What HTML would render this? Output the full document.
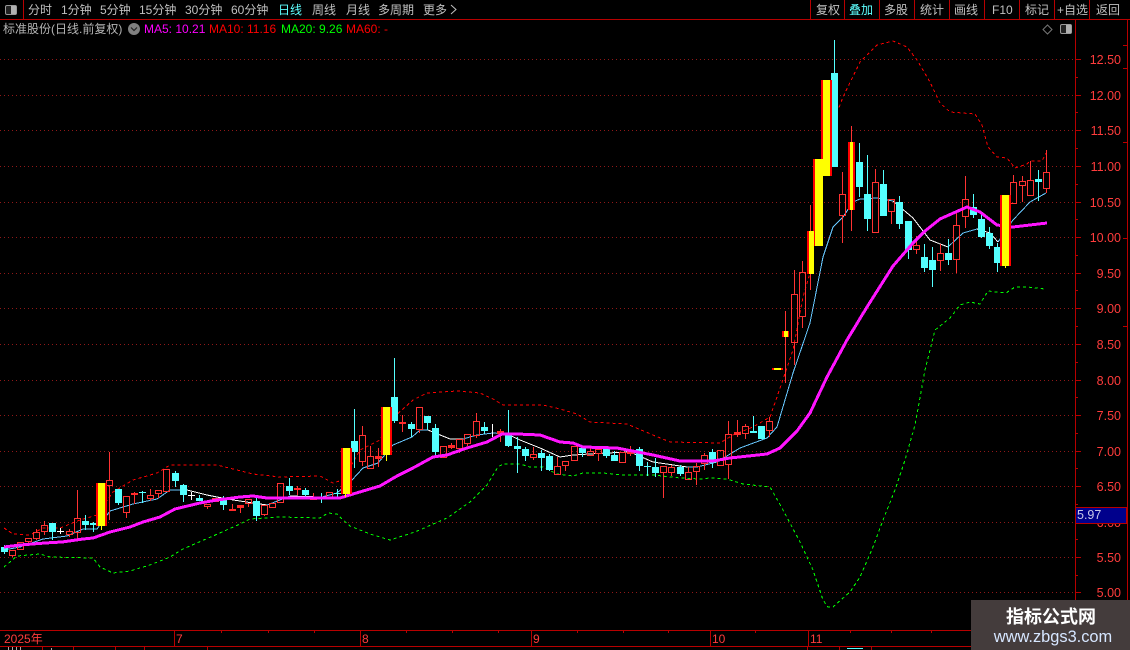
<!DOCTYPE html>
<html><head><meta charset="utf-8"><title>K</title>
<style>
html,body{margin:0;padding:0;background:#000;width:1130px;height:650px;overflow:hidden}
svg{display:block;position:absolute;left:0;top:0}
text{font-family:"Liberation Sans","WenQuanYi Zen Hei","Noto Sans CJK SC",sans-serif;font-size:12px}
.t{fill:#c0c0c0}
.c{fill:#5effff}
.p{fill:#ff3c3c;font-size:12.5px;text-anchor:end}
.d{fill:#ff3c3c;font-size:12px}
</style></head><body>
<svg width="1130" height="650" viewBox="0 0 1130 650" xmlns="http://www.w3.org/2000/svg">
<defs><pattern id="g" width="4" height="1" patternUnits="userSpaceOnUse"><rect width="1" height="1" fill="#901818"/></pattern></defs>
<rect width="1130" height="650" fill="#000"/>
<!-- grid -->
<g fill="url(#g)" shape-rendering="crispEdges">
<rect x="0" y="59" width="1075" height="1"/><rect x="0" y="95" width="1075" height="1"/><rect x="0" y="130" width="1075" height="1"/><rect x="0" y="166" width="1075" height="1"/><rect x="0" y="202" width="1075" height="1"/><rect x="0" y="237" width="1075" height="1"/><rect x="0" y="273" width="1075" height="1"/><rect x="0" y="308" width="1075" height="1"/><rect x="0" y="344" width="1075" height="1"/><rect x="0" y="380" width="1075" height="1"/><rect x="0" y="415" width="1075" height="1"/><rect x="0" y="451" width="1075" height="1"/><rect x="0" y="486" width="1075" height="1"/><rect x="0" y="522" width="1075" height="1"/><rect x="0" y="557" width="1075" height="1"/><rect x="0" y="592" width="1075" height="1"/>
</g>
<!-- thin MA -->
<g fill="none" stroke-width="1" shape-rendering="crispEdges">
<path stroke="#68c8ff" d="M4 550L20 547L43 539L67 536L83 529L97 529L110 511L133 504L157 499L170 490L187 490M267 505L280 500L290 496M322 497L337 493L352 480L363 468L378 463L393 445L412 437L420 430L428 430M463 439L477 435L493 433L507 434M687 467L697 467L717 462L740 448L767 438L777 427L793 373L810 323L823 257L833 227L843 217L853 202L860 199L877 198L893 201M948 247L963 233L977 229M998 242L1013 220L1030 202L1046 193"/>
<path stroke="#fff" d="M187 490L207 495L227 499L253 503L267 505M290 496L322 497M428 430L450 439L463 439M507 434L520 440L540 448L560 457L573 455L607 453L630 452L653 462L687 467M893 201L913 218L930 240L948 247M977 229L990 233L998 242"/>
<!-- upper band -->
<path stroke="#f00" stroke-dasharray="3 3" d="M4 528L13 534L30 535L43 528L60 528L80 520L97 515L113 492L133 480L157 473L170 465L217 465L233 469L253 474L280 477L320 476L333 483L343 480L360 450L380 440L393 418L413 400L427 393L457 391L480 393L493 399L503 405L543 405L560 409L577 414L590 422L627 424L653 435L670 442L720 443L733 435L753 427L770 417L777 397L793 350L803 297L810 273L823 173L833 123L843 97L860 62L877 45L893 41L907 47L917 60L930 82L940 103L950 112L975 114L982 125L988 147L997 157L1007 158L1015 168L1027 164L1030 161L1042 161L1046 153"/>
<!-- lower band -->
<path stroke="#0f0" stroke-dasharray="3 3" d="M4 567L17 556L40 554L50 557L93 558L100 567L113 573L130 571L150 565L170 557L183 549L213 536L240 524L250 519L280 517L320 518L328 513L337 514L343 520L350 526L370 534L390 540L415 532L447 518L470 502L487 485L498 467L503 464L520 464L530 467L543 467L557 474L573 476L583 473L603 473L623 475L653 475L680 478L700 479L710 478L727 479L743 484L770 487L782 508L800 542L813 570L823 600L828 607L833 607L850 592L860 577L873 547L883 520L895 490L905 460L915 425L925 370L935 330L950 318L960 305L970 302L980 304L988 291L1006 293L1015 287L1027 287L1045 289"/>
</g>
<g shape-rendering="crispEdges" fill="none">
<!-- red hollow -->
<path stroke="#ff3232" d="M12.5 555V557M9.5 550.5h6v5h-6zM17.5 542.5h6v7h-6zM28.5 541V544M25.5 538.5h6v3h-6zM36.5 529V532M36.5 538V540M33.5 532.5h6v6h-6zM44.5 521V525M44.5 531V535M41.5 525.5h6v6h-6zM69.5 529V531M69.5 534V537M66.5 531.5h6v3h-6zM77.5 490V518M77.5 532V540M74.5 518.5h6v14h-6zM109.5 452V480M109.5 485V520M106.5 480.5h6v5h-6zM126.5 512V518M123.5 496.5h6v16h-6zM150.5 489V495M150.5 498V501M147.5 495.5h6v3h-6zM158.5 493V498M155.5 490.5h6v3h-6zM163.5 469.5h6v22h-6zM207.5 506V509M204.5 504.5h6v2h-6zM212.5 498.5h6v3h-6zM248.5 503V507M245.5 499.5h6v4h-6zM264.5 514V516M261.5 505.5h6v9h-6zM269.5 503.5h6v4h-6zM277.5 483.5h6v19h-6zM329.5 497V499M326.5 492.5h6v5h-6zM362.5 426V435M362.5 461V466M359.5 435.5h6v26h-6zM370.5 446V456M367.5 456.5h6v12h-6zM419.5 429V433M416.5 407.5h6v22h-6zM440.5 446.5h6v11h-6zM459.5 448V453M456.5 439.5h6v9h-6zM467.5 443V446M464.5 434.5h6v9h-6zM476.5 413V421M476.5 435V438M473.5 421.5h6v14h-6zM533.5 447V454M533.5 457V460M530.5 454.5h6v3h-6zM557.5 457V466M554.5 466.5h6v8h-6zM565.5 465V471M562.5 461.5h6v4h-6zM571.5 446.5h6v14h-6zM590.5 447V451M587.5 451.5h6v4h-6zM598.5 453V461M595.5 449.5h6v4h-6zM619.5 452.5h6v10h-6zM663.5 472V498M660.5 466.5h6v6h-6zM671.5 465V467M671.5 472V476M668.5 467.5h6v5h-6zM688.5 467V472M685.5 472.5h6v7h-6zM696.5 463V466M696.5 471V485M693.5 466.5h6v5h-6zM704.5 453V455M704.5 463V470M701.5 455.5h6v8h-6zM717.5 450.5h6v15h-6zM728.5 421V434M728.5 464V479M725.5 434.5h6v30h-6zM745.5 424V426M745.5 433V439M742.5 426.5h6v7h-6zM769.5 417V421M769.5 430V437M766.5 421.5h6v9h-6zM794.5 270V294M794.5 342V365M791.5 294.5h6v48h-6zM802.5 261V272M802.5 316V328M799.5 272.5h6v44h-6zM842.5 172V194M842.5 215V243M839.5 194.5h6v21h-6zM875.5 169V182M872.5 182.5h6v50h-6zM891.5 211V224M888.5 199.5h6v12h-6zM916.5 236V245M916.5 249V254M913.5 245.5h6v4h-6zM940.5 244V253M940.5 260V271M937.5 253.5h6v7h-6zM956.5 213V225M956.5 259V273M953.5 225.5h6v34h-6zM965.5 176V199M965.5 216V228M962.5 199.5h6v17h-6zM1013.5 175V182M1010.5 182.5h6v21h-6zM1022.5 176V181M1022.5 185V202M1019.5 181.5h6v4h-6zM1030.5 161V180M1027.5 180.5h6v15h-6zM1046.5 150V172M1046.5 188V193M1043.5 172.5h6v16h-6z"/>
<!-- red solid small -->
<path stroke="#ff3232" d="M232.5 504V510M240.5 505V513M297.5 486V495M313.5 493V500M378.5 448V467M402.5 415V432M451.5 443V449M500.5 429V442M630.5 446V456M737.5 420V437M134.5 492V504M785.5 311V383M810.5 205V290M851.5 126V231"/>
<path fill="#ff2a2a" d="M229 509h7v2h-7zM237 505h7v3h-7zM294 488h7v2h-7zM310 497h7v3h-7zM375 456h7v3h-7zM399 422h7v2h-7zM448 445h7v3h-7zM497 431h7v3h-7zM627 451h7v3h-7zM734 432h7v3h-7zM131 493h7v2h-7z"/>
<!-- cyan -->
<path stroke="#54ffff" d="M4.5 545V554M52.5 523V540M85.5 515V530M93.5 522V532M118.5 489V505M142.5 491V503M175.5 471V487M183.5 484V502M199.5 495V501M223.5 496V510M256.5 498V521M289.5 478V495M305.5 488V498M321.5 493V503M337.5 489V498M354.5 409V468M394.5 358V423M411.5 422V437M427.5 416V430M435.5 424V456M484.5 422V434M508.5 410V447M517.5 437V473M525.5 447V461M541.5 450V471M549.5 454V471M582.5 448V457M606.5 448V458M614.5 451V461M639.5 447V471M647.5 462V476M655.5 458V477M680.5 465V476M712.5 449V468M753.5 416V433M834.5 40V167M859.5 143V197M867.5 155V231M883.5 170V216M899.5 196V229M908.5 221V259M924.5 244V272M932.5 247V287M948.5 239V265M973.5 194V218M981.5 213V238M989.5 227V249M997.5 243V272M1038.5 170V201"/>
<path fill="#54ffff" d="M1 547h7v5h-7zM49 523h7v9h-7zM82 521h7v4h-7zM90 523h7v2h-7zM115 489h7v14h-7zM139 492h7v1h-7zM172 473h7v8h-7zM180 485h7v10h-7zM196 498h7v3h-7zM220 500h7v5h-7zM253 501h7v15h-7zM286 486h7v5h-7zM302 490h7v5h-7zM318 497h7v1h-7zM334 493h7v1h-7zM351 441h7v11h-7zM391 397h7v24h-7zM408 424h7v5h-7zM424 416h7v7h-7zM432 428h7v24h-7zM481 427h7v4h-7zM505 435h7v11h-7zM514 446h7v3h-7zM522 449h7v7h-7zM538 453h7v5h-7zM546 456h7v14h-7zM579 448h7v5h-7zM603 448h7v8h-7zM611 455h7v6h-7zM636 449h7v17h-7zM644 466h7v1h-7zM652 467h7v6h-7zM677 467h7v7h-7zM709 452h7v11h-7zM750 431h7v2h-7zM758 426h7v13h-7zM831 73h7v94h-7zM856 162h7v25h-7zM864 194h7v25h-7zM880 184h7v32h-7zM896 202h7v22h-7zM905 221h7v29h-7zM921 257h7v11h-7zM929 260h7v10h-7zM945 253h7v7h-7zM970 207h7v8h-7zM978 219h7v18h-7zM986 233h7v13h-7zM994 247h7v16h-7zM1035 179h7v3h-7z"/>
<!-- white doji -->
<path stroke="#fff" d="M60.5 528V534M191.5 492V500M492.5 424V437"/>
<path fill="#fff" d="M57 531h7v1h-7zM188 495h7v1h-7z"/>
</g>
<!-- MA20 magenta -->
<path fill="none" stroke="#ff14ff" stroke-width="3" stroke-linejoin="round" shape-rendering="crispEdges" d="M4 547L20 545L45 543L62 542L83 539L93 538L110 532L130 527L143 522L160 517L175 509L200 503L217 500L240 497L253 496L267 498L340 498L353 494L380 486L397 476L413 468L433 457L447 455L467 448L487 442L502 434L517 434L540 435L560 442L573 443L583 447L617 448L653 455L680 461L713 461L730 458L767 454L780 448L797 431L810 413L827 377L847 340L867 307L893 266L913 243L925 231L940 219L967 207L980 212L997 225L1013 227L1030 225L1047 223"/>
<!-- yellow bars -->
<g shape-rendering="crispEdges">
<path stroke="#ffff00" d="M101.5 526V530M345.5 494V497M386.5 455V461M1005.5 266V268"/>
<path fill="#f00" d="M96 483h11v43h-11zM341 448h11v46h-11zM381 407h11v48h-11zM782 331h7v6h-7zM772 368h11v2h-11zM807 231h7v43h-7zM813 159h10v87h-10zM821 80h11v96h-11zM848 142h7v68h-7zM1000 195h11v71h-11z"/>
<path fill="#ff0" d="M98 483h7v43h-7zM343 448h7v46h-7zM383 407h7v48h-7zM784 331h4v6h-4zM774 368h7v2h-7zM809 231h5v43h-5zM815 159h8v87h-8zM823 80h7v96h-7zM850 142h3v68h-3zM1002 195h7v71h-7z"/>
</g>
<!-- frame -->
<g shape-rendering="crispEdges" fill="none" stroke="#b80000">
<path d="M0 19.5H1130M0 630.5H1075M0 646.5H1130M1075.5 19V630M1127.5 19V650"/>
<path d="M23.5 0V19M810.5 0V19M844.5 0V19M879.5 0V19M914.5 0V19M949.5 0V19M984.5 0V19M1019.5 0V19M1054.5 0V19M1089.5 0V19"/>
<path d="M174.5 630V646M360.5 630V646M531.5 630V646M710.5 630V646M808.5 630V646M221.5 630V633M268.5 630V633M314.5 630V633M406.5 630V633M452.5 630V633M498.5 630V633M577.5 630V633M623.5 630V633M668.5 630V633M755.5 630V633M850.5 630V633M891.5 630V633M931.5 630V633M42.5 646V650M73.5 646V650M115.5 646V650M144.5 646V650M207.5 646V650M807.5 646V650M839.5 646V650M871.5 646V650"/>
<path d="M1075 59.5h6M1075 95.5h6M1075 130.5h6M1075 166.5h6M1075 202.5h6M1075 237.5h6M1075 273.5h6M1075 308.5h6M1075 344.5h6M1075 380.5h6M1075 415.5h6M1075 451.5h6M1075 486.5h6M1075 522.5h6M1075 557.5h6M1075 592.5h6M1075 77.5h3M1075 112.5h3M1075 148.5h3M1075 184.5h3M1075 219.5h3M1075 255.5h3M1075 290.5h3M1075 326.5h3M1075 362.5h3M1075 397.5h3M1075 433.5h3M1075 468.5h3M1075 504.5h3M1075 539.5h3M1075 575.5h3"/>
<path d="M1123 45.5h4M1123 68.5h4M1123 142.5h4M1123 238.5h4M1123 326.5h4"/>
</g>
<!-- bottom fragments -->
<path d="M8.5 647V650M12.5 647V650M16.5 647V650M20.5 647V650M51.5 648V650" stroke="#aaa" shape-rendering="crispEdges"/>
<path d="M847 648.5h16" stroke="#54ffff" shape-rendering="crispEdges"/>
<!-- toolbar text -->
<text class="t" x="28" y="14">分时</text>
<text class="t" x="61" y="14">1分钟</text>
<text class="t" x="100" y="14">5分钟</text>
<text class="t" x="139" y="14">15分钟</text>
<text class="t" x="185" y="14">30分钟</text>
<text class="t" x="231" y="14">60分钟</text>
<text class="c" x="278" y="14">日线</text>
<text class="t" x="312" y="14">周线</text>
<text class="t" x="346" y="14">月线</text>
<text class="t" x="378" y="14">多周期</text>
<text class="t" x="423" y="14">更多</text>
<path d="M451 5L456 9.5L451 14" fill="none" stroke="#c0c0c0"/>
<text class="t" x="816" y="14">复权</text>
<text class="c" x="849" y="14">叠加</text>
<text class="t" x="884" y="14">多股</text>
<text class="t" x="920" y="14">统计</text>
<text class="t" x="954" y="14">画线</text>
<text class="t" x="992" y="14">F10</text>
<text class="t" x="1025" y="14">标记</text>
<text class="t" x="1057" y="14">+自选</text>
<text class="t" x="1096" y="14">返回</text>
<!-- panel icons -->
<rect x="5.5" y="5.5" width="11" height="9" rx="1.5" fill="#222" stroke="#9a9a9a"/>
<rect x="11" y="6" width="5" height="8" fill="#b0b0b0"/>
<rect x="1060.5" y="24.5" width="11" height="9" rx="1.5" fill="#222" stroke="#9a9a9a"/>
<rect x="1066" y="25" width="5" height="8" fill="#b0b0b0"/>
<path d="M1047.5 25L1052 29.5L1047.5 34L1043 29.5Z" fill="none" stroke="#777"/>
<!-- title row -->
<text x="3" y="33" fill="#b4b4b4">标准股份(日线.前复权)</text>
<circle cx="134" cy="29" r="6" fill="#808080"/>
<path d="M131 27.5L134 30.5L137 27.5" fill="none" stroke="#222" stroke-width="1.2"/>
<text x="144" y="33" fill="#ff00ff">MA5: 10.21</text>
<text x="209" y="33" fill="#ff0000">MA10: 11.16</text>
<text x="281" y="33" fill="#00ff00">MA20: 9.26</text>
<text x="346" y="33" fill="#ff0000">MA60: -</text>
<!-- price labels -->
<text class="p" x="1121" y="64">12.50</text>
<text class="p" x="1121" y="100">12.00</text>
<text class="p" x="1121" y="135">11.50</text>
<text class="p" x="1121" y="171">11.00</text>
<text class="p" x="1121" y="207">10.50</text>
<text class="p" x="1121" y="242">10.00</text>
<text class="p" x="1121" y="278">9.50</text>
<text class="p" x="1121" y="313">9.00</text>
<text class="p" x="1121" y="349">8.50</text>
<text class="p" x="1121" y="385">8.00</text>
<text class="p" x="1121" y="420">7.50</text>
<text class="p" x="1121" y="456">7.00</text>
<text class="p" x="1121" y="491">6.50</text>
<text class="p" x="1121" y="527">6.00</text>
<text class="p" x="1121" y="562">5.50</text>
<text class="p" x="1121" y="597">5.00</text>
<rect x="1075.5" y="507.5" width="51" height="16" fill="#00008c" stroke="#b80000" shape-rendering="crispEdges"/>
<text x="1077" y="519" fill="#c8c8e8" style="font-size:12.5px">5.97</text>
<!-- date labels -->
<text class="d" x="4" y="643">2025年</text>
<text class="d" x="176" y="643">7</text>
<text class="d" x="362" y="643">8</text>
<text class="d" x="533" y="643">9</text>
<text class="d" x="712" y="643">10</text>
<text class="d" x="810" y="643">11</text>
<!-- watermark -->
<rect x="971" y="600" width="159" height="50" fill="#443c3c"/>
<text x="1051" y="623" text-anchor="middle" fill="#fff" style="font-size:18px;font-weight:bold">指标公式网</text>
<text x="1053" y="642" text-anchor="middle" fill="#d6e6ff" style="font-size:16.4px">www.zbgs3.com</text>
</svg>
</body></html>
